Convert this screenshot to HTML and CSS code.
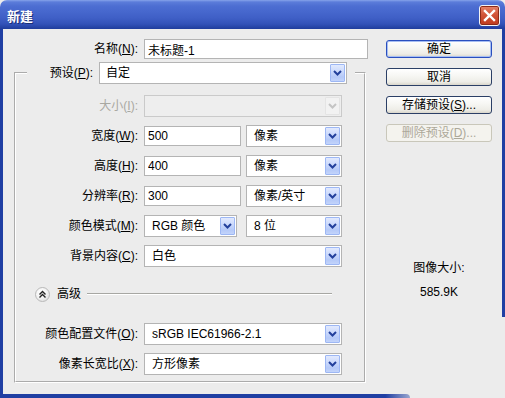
FILE: index.html
```html
<!DOCTYPE html>
<html lang="zh-CN">
<head>
<meta charset="utf-8">
<title>新建</title>
<link rel="stylesheet" href="styles.css">
</head>
<body>
<div class="window">
  <div class="titlebar">
    <span class="title">新建</span>
    <span class="close">
      <svg width="19" height="19" viewBox="0 0 19 19"><path d="M5 5 L14 14 M14 5 L5 14" stroke="#fff" stroke-width="2.4" stroke-linecap="square"/></svg>
    </span>
  </div>
  <div class="body">
    <div class="main">
      <div class="name-row">
        <span class="lbl name-lbl">名称(<u>N</u>):</span>
        <input class="text name-input" type="text" value="未标题-1">
      </div>
      <fieldset class="group">
        <legend class="legend">
          <span class="legend-inner">
            <span class="lbl preset-lbl">预设(<u>P</u>):</span>
            <span class="combo preset"><span class="val">自定</span><span class="arrow"><svg width="9" height="6" viewBox="0 0 9 6"><path d="M1 1 L4.5 4.5 L8 1" fill="none" stroke="#23409C" stroke-width="2"/></svg></span></span>
          </span>
        </legend>
        <div class="row">
          <span class="lbl disabled">大小(<u>I</u>):</span>
          <span class="combo full off"><span class="val"></span><span class="arrow"><svg width="9" height="6" viewBox="0 0 9 6"><path d="M1 1 L4.5 4.5 L8 1" fill="none" stroke="#C4C4C4" stroke-width="2"/></svg></span></span>
        </div>
        <div class="row">
          <span class="lbl">宽度(<u>W</u>):</span>
          <input class="text num" type="text" value="500">
          <span class="combo unit"><span class="val">像素</span><span class="arrow"><svg width="9" height="6" viewBox="0 0 9 6"><path d="M1 1 L4.5 4.5 L8 1" fill="none" stroke="#23409C" stroke-width="2"/></svg></span></span>
        </div>
        <div class="row">
          <span class="lbl">高度(<u>H</u>):</span>
          <input class="text num" type="text" value="400">
          <span class="combo unit"><span class="val">像素</span><span class="arrow"><svg width="9" height="6" viewBox="0 0 9 6"><path d="M1 1 L4.5 4.5 L8 1" fill="none" stroke="#23409C" stroke-width="2"/></svg></span></span>
        </div>
        <div class="row">
          <span class="lbl">分辨率(<u>R</u>):</span>
          <input class="text num" type="text" value="300">
          <span class="combo unit"><span class="val">像素/英寸</span><span class="arrow"><svg width="9" height="6" viewBox="0 0 9 6"><path d="M1 1 L4.5 4.5 L8 1" fill="none" stroke="#23409C" stroke-width="2"/></svg></span></span>
        </div>
        <div class="row">
          <span class="lbl">颜色模式(<u>M</u>):</span>
          <span class="combo mode"><span class="val">RGB 颜色</span><span class="arrow"><svg width="9" height="6" viewBox="0 0 9 6"><path d="M1 1 L4.5 4.5 L8 1" fill="none" stroke="#23409C" stroke-width="2"/></svg></span></span>
          <span class="combo depth"><span class="val">8 位</span><span class="arrow"><svg width="9" height="6" viewBox="0 0 9 6"><path d="M1 1 L4.5 4.5 L8 1" fill="none" stroke="#23409C" stroke-width="2"/></svg></span></span>
        </div>
        <div class="row">
          <span class="lbl">背景内容(<u>C</u>):</span>
          <span class="combo full"><span class="val">白色</span><span class="arrow"><svg width="9" height="6" viewBox="0 0 9 6"><path d="M1 1 L4.5 4.5 L8 1" fill="none" stroke="#23409C" stroke-width="2"/></svg></span></span>
        </div>
        <div class="adv">
          <span class="adv-btn"><svg width="13" height="13" viewBox="0 0 13 13"><path d="M3.5 6.5 L6.5 3.5 L9.5 6.5 M3.5 9.5 L6.5 6.5 L9.5 9.5" fill="none" stroke="#222" stroke-width="1.4"/></svg></span>
          <span class="adv-text">高级</span>
          <span class="adv-line"></span>
        </div>
        <div class="row">
          <span class="lbl">颜色配置文件(<u>O</u>):</span>
          <span class="combo full"><span class="val">sRGB IEC61966-2.1</span><span class="arrow"><svg width="9" height="6" viewBox="0 0 9 6"><path d="M1 1 L4.5 4.5 L8 1" fill="none" stroke="#23409C" stroke-width="2"/></svg></span></span>
        </div>
        <div class="row">
          <span class="lbl">像素长宽比(<u>X</u>):</span>
          <span class="combo full"><span class="val">方形像素</span><span class="arrow"><svg width="9" height="6" viewBox="0 0 9 6"><path d="M1 1 L4.5 4.5 L8 1" fill="none" stroke="#23409C" stroke-width="2"/></svg></span></span>
        </div>
      </fieldset>
    </div>
    <div class="side">
      <span class="btn default">确定</span>
      <span class="btn">取消</span>
      <span class="btn">存储预设(<u>S</u>)...</span>
      <span class="btn dis">删除预设(<u>D</u>)...</span>
      <div class="info">
        <div class="info-label">图像大小:</div>
        <div class="info-value">585.9K</div>
      </div>
    </div>
  </div>
</div>
</body>
</html>
```

FILE: styles.css
```css
* { box-sizing: border-box; }
html, body { margin: 0; padding: 0; }
body {
  width: 505px;
  height: 398px;
  overflow: hidden;
  background: #ECECEC;
  font: 12px/14px "Liberation Sans", "Noto Sans CJK SC", sans-serif;
  color: #000;
}
.window {
  width: 505px;
  height: 398px;
  background: #ECECEC;
}
.titlebar {
  height: 29px;
  display: flex;
  align-items: center;
  justify-content: space-between;
  padding: 0 5px 0 7px;
  border-radius: 7px 7px 0 0;
  background: linear-gradient(to bottom, #86A3EA 0px, #5B7CDA 2px, #4D6ED2 6px, #4667CD 12px, #3F5FC6 18px, #3252B8 24px, #1F3D9C 29px);
}
.title {
  color: #fff;
  font: bold 13px/15px "Noto Sans CJK SC", sans-serif;
  text-shadow: 1px 1px 0 #1A2E78;
  margin-top: 1px;
}
.close {
  width: 21px;
  height: 21px;
  display: flex;
  align-items: center;
  justify-content: center;
  border: 1px solid #F4F4F4;
  border-radius: 3px;
  background: linear-gradient(to bottom, #E6866C, #D25539 45%, #BE3A1D);
  box-shadow: 0 0 0 1px #8C2A18 inset;
  margin-top: 1px;
}
.body {
  position: relative;
  height: 369px;
  display: flex;
  border-left: 3px solid #203FA3;
}
.body::before {
  content: "";
  position: absolute;
  right: 0;
  top: 0;
  width: 3px;
  height: 288px;
  background: #203FA3;
}
.body::after {
  content: "";
  position: absolute;
  left: -3px;
  bottom: 0;
  width: 410px;
  height: 4px;
  background: linear-gradient(to right, #203FA3 94%, rgba(32,63,163,0.4));
  border-radius: 0 4px 0 0;
}
.main {
  padding: 10px 0 0 11px;
}
.lbl {
  text-align: right;
  white-space: nowrap;
}
.lbl u, .btn u { text-decoration: underline; text-underline-offset: 1px; }
.disabled { color: #A9A8A2; }
.name-row {
  display: flex;
  align-items: center;
  height: 20px;
}
.name-lbl { width: 124px; margin-right: 6px; }
.text {
  height: 20px;
  border: 1px solid #B4B4B4;
  background: #fff;
  font: 12px "Liberation Sans", "Noto Sans CJK SC", sans-serif;
  color: #000;
  padding: 0 3px;
  margin: 0;
  outline: none;
}
.name-input { width: 224px; }
.num { width: 97px; margin-right: 5px; }
.group {
  width: 352px;
  margin: 3px 0 0 0;
  padding: 11px 0 6px 0;
  border: 2px groove #FFFFFF;
  min-inline-size: 0;
}
.legend {
  margin-left: 11px;
  padding: 0 8px 0 0;
}
.legend-inner {
  display: flex;
  align-items: center;
  height: 22px;
}
.preset-lbl { width: 66px; margin-right: 6px; }
.row {
  display: flex;
  align-items: center;
  height: 22px;
  margin-top: 8px;
}
.group > .row:first-of-type { margin-top: 0; }
.row > .lbl { width: 122px; margin-right: 6px; }
.combo {
  height: 22px;
  display: flex;
  align-items: stretch;
  border: 1px solid #B4B4B4;
  background: #fff;
  padding: 1px;
}
.combo .val {
  flex: 1;
  display: flex;
  align-items: center;
  padding-left: 5px;
  white-space: nowrap;
  overflow: hidden;
}
.combo .arrow {
  width: 15px;
  display: flex;
  align-items: center;
  justify-content: center;
  border: 1px solid #9DB7F4;
  border-radius: 1px;
  background: linear-gradient(to bottom, #E2EAFE 0%, #CCDAFC 40%, #B5C9F8 75%, #C3D4FB 100%);
}
.combo .arrow svg { margin-top: -1px; }
.combo.off { background: #EEEEEE; border-color: #CACACA; }
.combo.off .arrow { background: #F2F2F2; border-color: #E4E4E4; }
.preset { width: 248px; }
.full { width: 198px; }
.unit { width: 96px; }
.mode { width: 93px; margin-right: 9px; }
.depth { width: 96px; }
.mode .val, .depth .val, .full .val, .unit .val { padding-left: 6px; }
.adv {
  display: flex;
  align-items: center;
  height: 22px;
  margin: 16px 32px 18px 19px;
}
.adv-btn {
  width: 15px;
  height: 15px;
  border-radius: 50%;
  border: 1px solid #B9B9B9;
  background: radial-gradient(circle at 40% 35%, #FFFFFF 0%, #F4F4F4 45%, #D4D4D4 100%);
  display: flex;
  align-items: center;
  justify-content: center;
}
.adv-text { margin-left: 7px; }
.adv-line {
  flex: 1;
  height: 2px;
  margin-left: 6px;
  border-top: 1px solid #A7A7A3;
  border-bottom: 1px solid #FFFFFF;
}
.side {
  margin-left: 18px;
  padding-top: 11px;
  width: 106px;
  display: flex;
  flex-direction: column;
}
.btn {
  height: 18px;
  margin-bottom: 10px;
  display: flex;
  align-items: center;
  justify-content: center;
  border: 1px solid #2B3F66;
  border-radius: 3px;
  background: linear-gradient(to bottom, #FFFFFF 0%, #F7F7F4 40%, #EEEDE7 80%, #D9D6CB 100%);
  white-space: nowrap;
}
.btn.default {
  border-color: #2A4FBF;
  box-shadow: inset 0 0 0 1px #A7BEF2;
}
.btn.dis {
  border-color: #C9C7BA;
  color: #ACA899;
  background: #F4F3EE;
}
.info {
  margin-top: 109px;
  text-align: center;
}
.info-value { margin-top: 10px; }
```
